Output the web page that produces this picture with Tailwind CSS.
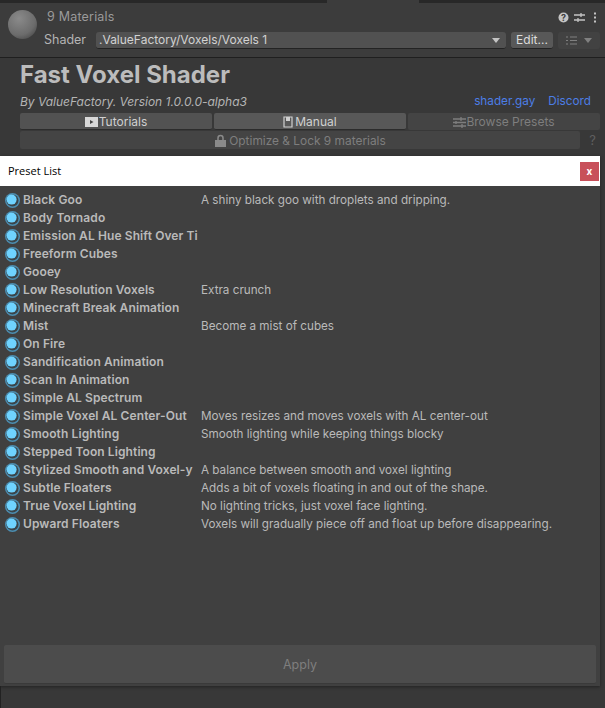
<!DOCTYPE html>
<html>
  <head>
    <meta charset="UTF-8" />
    <meta name="viewport" content="width=device-width, initial-scale=1.0" />
    <script src="https://cdn.jsdelivr.net/npm/@tailwindcss/browser@4"></script>
  </head>
  <body class="bg-[#383838] font-['Inter',sans-serif] overflow-hidden">
    <svg class="hidden">
      <symbol id="radio" viewBox="0 0 15 15">
        <circle cx="7.5" cy="7.5" r="7.500" fill="#4b8db0" />
        <circle cx="7.500" cy="7.500" r="6" fill="#3a4449" />
        <circle cx="6.600" cy="6.600" r="5" fill="#6fd3ff" />
      </symbol>
    </svg>
    <div class="w-[605px] h-[708px] flex flex-col bg-[#383838] text-[12px] text-[#c4c4c4]">
      <!-- tab strip -->
      <div class="h-[3px] bg-[#282828] flex">
        <div class="ml-[327px] w-[92px] bg-[#3c3c3c]"></div>
      </div>

      <!-- material header -->
      <div class="h-[55px] flex border-b border-[#1f1f1f] bg-[#3c3c3c]">
        <div class="w-[40px] pl-[8px] pt-[7px] shrink-0">
          <div class="w-[29px] h-[29px] rounded-full bg-[radial-gradient(circle_at_38%_30%,#8a8a8a,#6c6c6c_60%,#555555_78%,#333333_100%)]"></div>
        </div>
        <div class="flex-1 flex flex-col">
          <div class="h-[28px] pt-[1px] flex items-center pl-[7px] pr-[8px] text-[#9a9a9a] text-[12.5px] tracking-[0.2px]">
            <span class="flex-1">9 Materials</span>
            <div class="flex items-center gap-[5px]">
              <svg width="11" height="11" viewBox="0 0 11 11"><circle cx="5.5" cy="5.5" r="5" fill="#c4c4c4" /><text x="5.5" y="8.6" text-anchor="middle" font-size="9" font-weight="700" fill="#3c3c3c" font-family="Inter">?</text></svg>
              <svg width="11" height="11" viewBox="0 0 11 11" stroke="#c4c4c4" stroke-width="1.3"><path d="M0 3h11M0 8h11M7 1v4M4 6v4" /></svg>
              <svg class="ml-[3px]" width="4" height="11" viewBox="0 0 4 11" fill="#c4c4c4"><rect x="1" y="0.5" width="2" height="2" /><rect x="1" y="4.5" width="2" height="2" /><rect x="1" y="8.5" width="2" height="2" /></svg>
            </div>
          </div>
          <div class="flex items-center h-[17px] mt-[1px]">
            <span class="w-[56px] pl-[4px] text-[#b4b4b4] text-[12.5px]">Shader</span>
            <div class="w-[410px] h-[17px] flex items-center justify-between pl-[3px] pr-[6px] rounded-[3px] bg-[#515151] border-b border-[#232323] text-[#d2d2d2] text-[12px]">
              <span>.ValueFactory/Voxels/Voxels 1</span>
              <svg width="8" height="5" viewBox="0 0 8 5"><path d="M0 0h8L4 5z" fill="#c4c4c4" /></svg>
            </div>
            <div class="ml-[5px] w-[42px] h-[17px] flex items-center justify-center rounded-[3px] bg-[#585858] border-b border-[#232323] text-[#dcdcdc] text-[12px]">Edit...</div>
            <div class="ml-[5px] w-[42px] h-[17px] flex items-center justify-between px-[8px] rounded-[3px] bg-[#424242]">
              <svg width="11" height="9" viewBox="0 0 11 9" stroke="#808080"><path d="M0 1h2M4 1h7M0 4.500h2M4 4.500h7M0 8h2M4 8h7" /></svg>
              <svg width="8" height="5" viewBox="0 0 8 5"><path d="M0 0h8L4 5z" fill="#808080" /></svg>
            </div>
          </div>
        </div>
      </div>

      <!-- shader title -->
      <div class="h-[98px] pl-[20px] pr-[5px] flex flex-col">
        <h1 class="h-[35px] pt-[1px] text-[24px] leading-[32px] font-bold text-[#bcbcbc]">Fast Voxel Shader</h1>
        <div class="h-[18px] flex items-center justify-between pr-[9px] text-[12px]">
          <em class="text-[#b4b4b4]">By ValueFactory. Version 1.0.0.0-alpha3</em>
          <div class="flex gap-[13px] text-[#4c7ee6] text-[11.75px]">
            <span>shader.gay</span>
            <span>Discord</span>
          </div>
        </div>
        <div class="mt-[2px] flex gap-[2px] h-[17px] shrink-0">
          <div class="w-[192px] pt-[1px] flex items-center justify-center gap-[1px] rounded-[2px] bg-[#525252] border-b border-[#2c2c2c] text-[#d0d0d0]">
            <svg width="13" height="10" viewBox="0 0 13 10"><path fill="#d8d8d8" d="M0 0h13v10H0z" /><path fill="#444" d="M5 3l3.500 2L5 7z" /></svg>Tutorials
          </div>
          <div class="w-[192px] pt-[1px] flex items-center justify-center gap-[2px] rounded-[2px] bg-[#585858] border-b border-[#2c2c2c] text-[#d0d0d0]">
            <svg width="10" height="12" viewBox="0 0 10 12"><path fill="none" stroke="#d0d0d0" stroke-width="1.200" d="M1 1h8v10H1z" /><path fill="#d0d0d0" d="M3 1h4v4H3z" /></svg>Manual
          </div>
          <div class="w-[192px] pt-[1px] flex items-center justify-center rounded-[2px] bg-[#444444] text-[#7e7e7e]">
            <svg width="13" height="11" viewBox="0 0 13 11" stroke="#7e7e7e" stroke-width="1.300"><path d="M0 2h13M0 5.500h13M0 9h13M8 0v4M3 4v3M9 7v4" /></svg>Browse Presets
          </div>
        </div>
        <div class="mt-[1px] flex h-[18px] shrink-0">
          <div class="w-[560px] pl-[1px] pt-[2px] flex items-center justify-center gap-[3px] rounded-[2px] bg-[#444444] text-[#7e7e7e] text-[11.9px]">
            <svg class="-mt-[2px]" width="11" height="13" viewBox="0 0 11 13"><path fill="none" stroke="#8a8a8a" stroke-width="1.500" d="M3 6V4a2.500 2.500 0 0 1 5 0v2" /><path fill="#8a8a8a" d="M0 6h11v7H0z" /></svg>Optimize &amp; Lock 9 materials
          </div>
          <span class="ml-[6px] w-[13px] text-center text-[#5f5f5f] text-[13px]">?</span>
        </div>
      </div>

      <!-- preset window -->
      <div class="w-[600px] h-[530px] shrink-0 flex flex-col bg-[#404040] shadow-[0_1px_3px_#222]">
        <div class="h-[30px] shrink-0 flex items-center justify-between pl-[8px] pr-[1px] bg-white text-black">
          <span class="font-['Open_Sans',sans-serif] text-[11px]">Preset List</span>
          <div class="w-[19px] h-[19px] flex items-center justify-center bg-[#c8505a] text-white text-[10px] font-bold leading-none">x</div>
        </div>
        <ul class="h-[459px] shrink-0 pt-[5px] pl-[5px] text-[11.7px] text-[#bababa]">
          <li class="h-[18px] flex items-center"><svg class="w-[15px] h-[15px]"><use href="#radio" /></svg><b class="w-[181px] pl-[3px] text-[12px] tracking-[0.1px] font-semibold whitespace-nowrap">Black Goo</b><span class="pt-[2px]">A shiny black goo with droplets and dripping.</span></li>
          <li class="h-[18px] flex items-center"><svg class="w-[15px] h-[15px]"><use href="#radio" /></svg><b class="w-[181px] pl-[3px] text-[12px] tracking-[0.1px] font-semibold whitespace-nowrap">Body Tornado</b></li>
          <li class="h-[18px] flex items-center"><svg class="w-[15px] h-[15px]"><use href="#radio" /></svg><b class="w-[181px] pl-[3px] text-[12px] tracking-[0.1px] font-semibold whitespace-nowrap">Emission AL Hue Shift Over Ti</b></li>
          <li class="h-[18px] flex items-center"><svg class="w-[15px] h-[15px]"><use href="#radio" /></svg><b class="w-[181px] pl-[3px] text-[12px] tracking-[0.1px] font-semibold whitespace-nowrap">Freeform Cubes</b></li>
          <li class="h-[18px] flex items-center"><svg class="w-[15px] h-[15px]"><use href="#radio" /></svg><b class="w-[181px] pl-[3px] text-[12px] tracking-[0.1px] font-semibold whitespace-nowrap">Gooey</b></li>
          <li class="h-[18px] flex items-center"><svg class="w-[15px] h-[15px]"><use href="#radio" /></svg><b class="w-[181px] pl-[3px] text-[12px] tracking-[0.1px] font-semibold whitespace-nowrap">Low Resolution Voxels</b><span class="pt-[2px]">Extra crunch</span></li>
          <li class="h-[18px] flex items-center"><svg class="w-[15px] h-[15px]"><use href="#radio" /></svg><b class="w-[181px] pl-[3px] text-[12px] tracking-[0.1px] font-semibold whitespace-nowrap">Minecraft Break Animation</b></li>
          <li class="h-[18px] flex items-center"><svg class="w-[15px] h-[15px]"><use href="#radio" /></svg><b class="w-[181px] pl-[3px] text-[12px] tracking-[0.1px] font-semibold whitespace-nowrap">Mist</b><span class="pt-[2px]">Become a mist of cubes</span></li>
          <li class="h-[18px] flex items-center"><svg class="w-[15px] h-[15px]"><use href="#radio" /></svg><b class="w-[181px] pl-[3px] text-[12px] tracking-[0.1px] font-semibold whitespace-nowrap">On Fire</b></li>
          <li class="h-[18px] flex items-center"><svg class="w-[15px] h-[15px]"><use href="#radio" /></svg><b class="w-[181px] pl-[3px] text-[12px] tracking-[0.1px] font-semibold whitespace-nowrap">Sandification Animation</b></li>
          <li class="h-[18px] flex items-center"><svg class="w-[15px] h-[15px]"><use href="#radio" /></svg><b class="w-[181px] pl-[3px] text-[12px] tracking-[0.1px] font-semibold whitespace-nowrap">Scan In Animation</b></li>
          <li class="h-[18px] flex items-center"><svg class="w-[15px] h-[15px]"><use href="#radio" /></svg><b class="w-[181px] pl-[3px] text-[12px] tracking-[0.1px] font-semibold whitespace-nowrap">Simple AL Spectrum</b></li>
          <li class="h-[18px] flex items-center"><svg class="w-[15px] h-[15px]"><use href="#radio" /></svg><b class="w-[181px] pl-[3px] text-[12px] tracking-[0.1px] font-semibold whitespace-nowrap">Simple Voxel AL Center-Out</b><span class="pt-[2px]">Moves resizes and moves voxels with AL center-out</span></li>
          <li class="h-[18px] flex items-center"><svg class="w-[15px] h-[15px]"><use href="#radio" /></svg><b class="w-[181px] pl-[3px] text-[12px] tracking-[0.1px] font-semibold whitespace-nowrap">Smooth Lighting</b><span class="pt-[2px]">Smooth lighting while keeping things blocky</span></li>
          <li class="h-[18px] flex items-center"><svg class="w-[15px] h-[15px]"><use href="#radio" /></svg><b class="w-[181px] pl-[3px] text-[12px] tracking-[0.1px] font-semibold whitespace-nowrap">Stepped Toon Lighting</b></li>
          <li class="h-[18px] flex items-center"><svg class="w-[15px] h-[15px]"><use href="#radio" /></svg><b class="w-[181px] pl-[3px] text-[12px] tracking-[0.1px] font-semibold whitespace-nowrap">Stylized Smooth and Voxel-y</b><span class="pt-[2px]">A balance between smooth and voxel lighting</span></li>
          <li class="h-[18px] flex items-center"><svg class="w-[15px] h-[15px]"><use href="#radio" /></svg><b class="w-[181px] pl-[3px] text-[12px] tracking-[0.1px] font-semibold whitespace-nowrap">Subtle Floaters</b><span class="pt-[2px]">Adds a bit of voxels floating in and out of the shape.</span></li>
          <li class="h-[18px] flex items-center"><svg class="w-[15px] h-[15px]"><use href="#radio" /></svg><b class="w-[181px] pl-[3px] text-[12px] tracking-[0.1px] font-semibold whitespace-nowrap">True Voxel Lighting</b><span class="pt-[2px]">No lighting tricks, just voxel face lighting.</span></li>
          <li class="h-[18px] flex items-center"><svg class="w-[15px] h-[15px]"><use href="#radio" /></svg><b class="w-[181px] pl-[3px] text-[12px] tracking-[0.1px] font-semibold whitespace-nowrap">Upward Floaters</b><span class="pt-[2px]">Voxels will gradually piece off and float up before disappearing.</span></li>
        </ul>
        <div class="mx-[4px] h-[39px] pt-[3px] shrink-0 flex items-center justify-center rounded-[2px] bg-[#4c4c4c] border-b border-[#3a3a3a] text-[#7e7e7e] text-[12.5px]">Apply</div>
      </div>
      <div class="flex-1 border-l border-[#222222]"></div>
    </div>
  </body>
</html>
